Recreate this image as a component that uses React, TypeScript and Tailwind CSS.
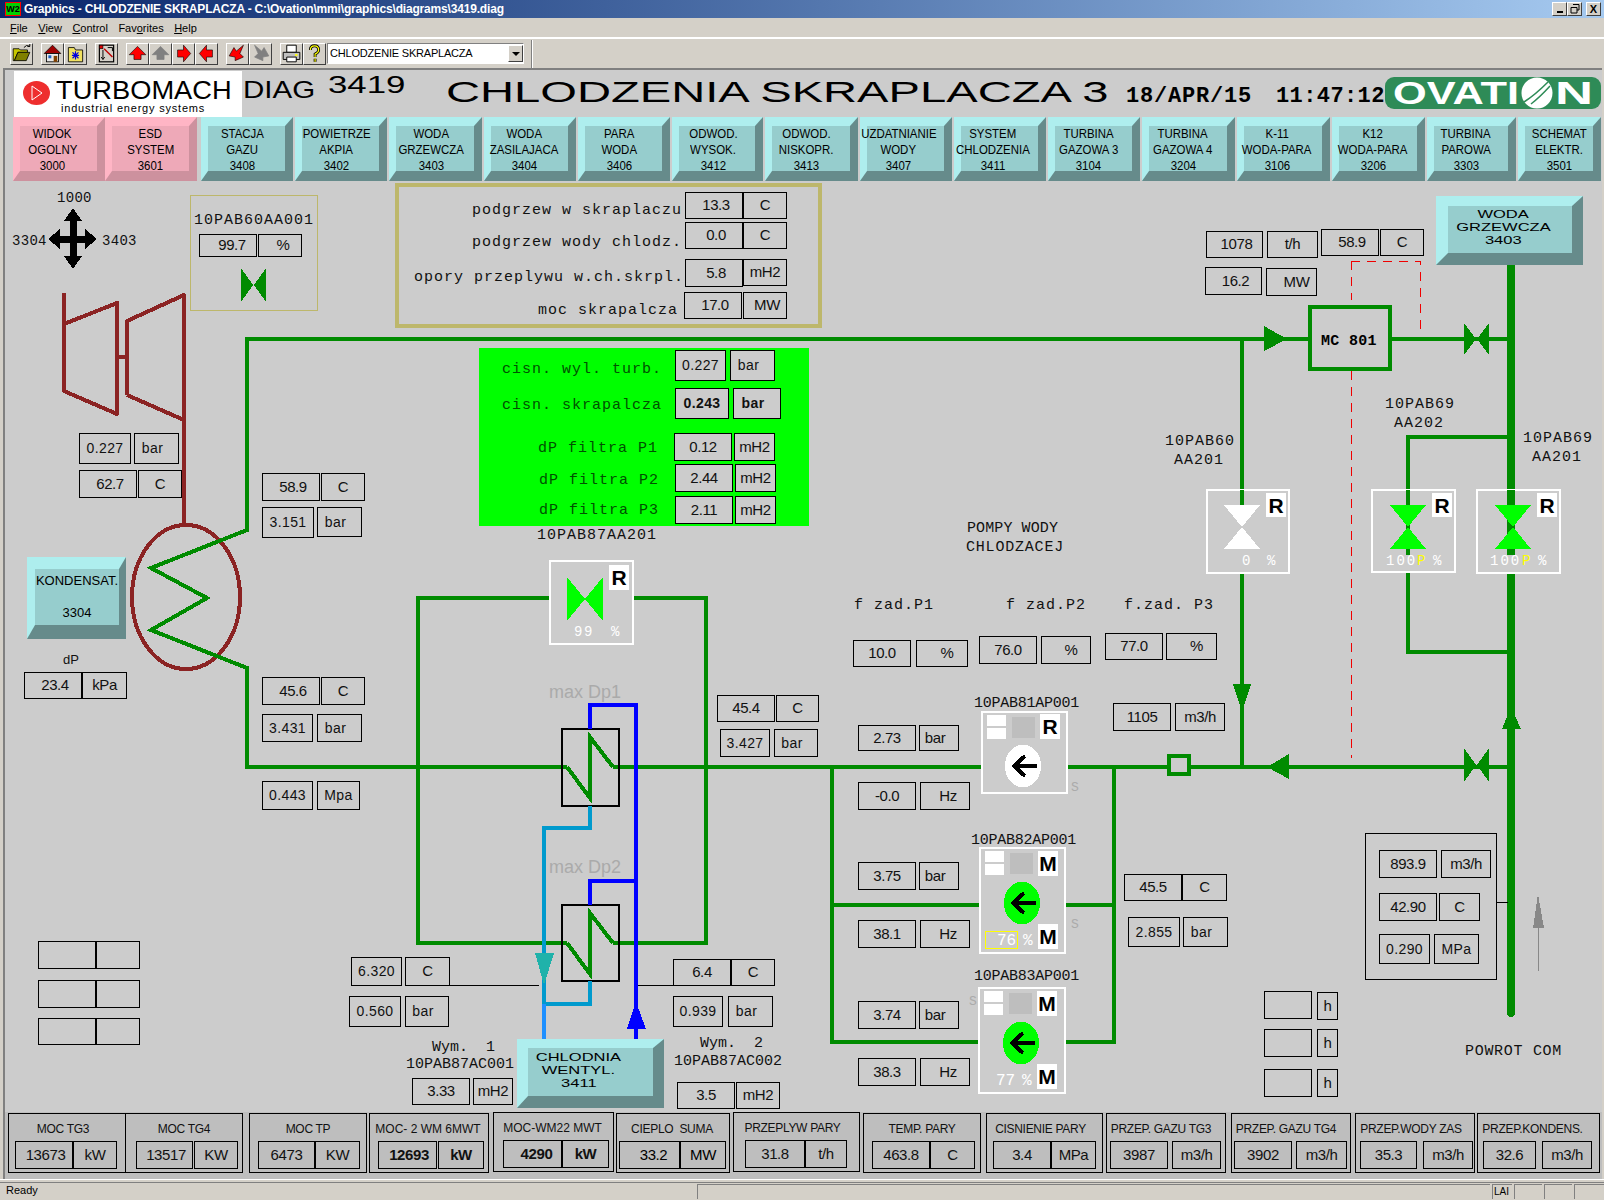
import { twMerge } from "tailwind-merge";

type CellProps = { c: string; t?: string; wide?: boolean; bold?: boolean };

// value box used all over the mimic
function Cell({ c, t, wide, bold }: CellProps) {
  return (
    <div
      className={twMerge(
        "flex items-center justify-center border border-black whitespace-nowrap text-[#111]",
        wide ? "text-[14px] tracking-[0.4px]" : "text-[15px] tracking-[-0.4px]",
        bold && "font-bold",
        t === "bar" && "pr-[8px]",
        t === "%" && "pl-[10px]",
        c
      )}
    >
      {t}
    </div>
  );
}

const V = (p: CellProps) => <Cell {...p} c={"absolute " + p.c} />;

// monospaced tag text
function L({ c, t }: { c: string; t: string }) {
  return (
    <span
      className={twMerge(
        "absolute mt-[2px] whitespace-pre font-['Liberation_Mono',monospace] text-[15px] leading-[18px] tracking-[1px] text-[#111]",
        c
      )}
    >
      {t}
    </span>
  );
}

function Tag({ c, t }: { c: string; t: string }) {
  return (
    <div className={"absolute flex items-center justify-center bg-white text-[21px] font-bold leading-none text-black " + c}>
      {t}
    </div>
  );
}

function Bevel({ c, lines, wide, navText }: { c: string; lines: string[]; wide?: boolean; navText?: boolean }) {
  return (
    <div
      className={twMerge(
        "flex flex-col items-center justify-center whitespace-nowrap border-solid border-t-[#aeeeee] border-l-[#aeeeee] border-r-[#668b8b] border-b-[#668b8b] bg-[#96cdcd] text-black",
        c
      )}
    >
      {lines.map((l, i) => (
        <span
          key={i}
          className={
            wide
              ? "scale-x-150 text-[11px] leading-[13px]"
              : navText
                ? "scale-x-[0.88] text-[13px] leading-[16px]"
                : "text-[13px] leading-[16px]"
          }
        >
          {l}
        </span>
      ))}
    </div>
  );
}

const navPink = "border-t-[#ffb5c5] border-l-[#ffb5c5] border-r-[#cd919e] border-b-[#cd919e] bg-[#eea9b8]";
const nav = "h-[64px] border-t-[9px] border-l-[7px] border-r-[8px] border-b-[10px] pt-[2px]";

const navItems = [
  { w: "w-[92px] pr-[8px]", lines: ["STACJA", "GAZU", "3408"] },
  { w: "w-[92px] pr-[8px]", lines: ["POWIETRZE", "AKPIA", "3402"] },
  { w: "w-[93px] pr-[8px]", lines: ["WODA", "GRZEWCZA", "3403"] },
  { w: "w-[92px] pr-[10px]", lines: ["WODA", "ZASILAJACA", "3404"] },
  { w: "w-[92px] pr-[8px]", lines: ["PARA", "WODA", "3406"] },
  { w: "w-[91px] pr-[8px]", lines: ["ODWOD.", "WYSOK.", "3412"] },
  { w: "w-[93px] pr-[10px]", lines: ["ODWOD.", "NISKOPR.", "3413"] },
  { w: "w-[92px] pr-[14px]", lines: ["UZDATNIANIE", "WODY", "3407"] },
  { w: "w-[92px] pr-[14px]", lines: ["SYSTEM", "CHLODZENIA", "3411"] },
  { w: "w-[92px] pr-[10px]", lines: ["TURBINA", "GAZOWA 3", "3104"] },
  { w: "w-[93px] pr-[10px]", lines: ["TURBINA", "GAZOWA 4", "3204"] },
  { w: "w-[93px] pr-[12px]", lines: ["K-11", "WODA-PARA", "3106"] },
  { w: "w-[93px] pr-[10px]", lines: ["K12", "WODA-PARA", "3206"] },
  { w: "w-[89px] pr-[10px]", lines: ["TURBINA", "PAROWA", "3303"] },
  { w: "w-[83px]", lines: ["SCHEMAT", "ELEKTR.", "3501"] },
];

function Tb({ children, c }: { children: React.ReactNode; c?: string }) {
  return (
    <div className={twMerge("flex h-[22px] w-[23px] items-center justify-center border border-t-white border-l-white border-r-[#404040] border-b-[#404040] bg-[#d4d0c8]", c)}>
      <svg viewBox="0 0 16 16" className="h-[19px] w-[19px]">
        {children}
      </svg>
    </div>
  );
}

type StatProps = { c: string; label: string; v: string; u: string; vc: string; uc: string; row: string; bold?: boolean; lc?: string };

function Stat({ c, label, v, u, vc, uc, row, bold, lc }: StatProps) {
  return (
    <div className={c}>
      <div className={twMerge("h-[16px] whitespace-pre text-center text-[12px] leading-[16px] tracking-[-0.3px] text-[#111]", lc)}>{label}</div>
      <div className={"mt-[4px] flex " + row}>
        <Cell c={"h-[28px] " + vc} t={v} bold={bold} />
        <Cell c={"h-[28px] " + uc} t={u} bold={bold} />
      </div>
    </div>
  );
}

function Pump({ x, y, w, h, fill, ex, ey }: { x: number; y: number; w: number; h: number; fill: string; ex: number; ey: number }) {
  return (
    <g>
      <rect x={x} y={y} width={w} height={h} fill="#cccccc" stroke="#fff" strokeWidth="2" />
      <rect x={x + 5} y={y + 3} width="19" height="11" fill="#fff" />
      <rect x={x + 5} y={y + 16} width="19" height="11" fill="#fff" />
      <rect x={x + 30} y={y + 5} width="23" height="21" fill="#bebebe" />
      <ellipse cx={ex} cy={ey} rx="18" ry="21.5" fill={fill} />
      <path d={`M${ex + 14} ${ey} H${ex - 8}`} stroke="#000" strokeWidth="4" fill="none" />
      <path d={`M${ex + 2} ${ey - 10} L${ex - 9} ${ey} L${ex + 2} ${ey + 10}`} stroke="#000" strokeWidth="4" fill="none" />
    </g>
  );
}

function Diagram() {
  return (
    <svg className="absolute left-0 top-0 h-[1200px] w-[1604px]" viewBox="0 0 1604 1200" shapeRendering="crispEdges">
      {/* direction cross */}
      <g fill="#000">
        <path d="M73 208 L82 221 H64 Z M73 269 L82 256 H64 Z M48 239 L60 229 V249 Z M97 239 L85 229 V249 Z" />
        <path d="M73 215 V262 M55 239 H91" stroke="#000" strokeWidth="7" />
      </g>

      {/* turbine + condenser */}
      <g fill="none" stroke="#8b2323" strokeWidth="4" strokeLinejoin="round">
        <path d="M64 293 V391 L117 414 V303 L64 324" />
        <path d="M117 357 H127" />
        <path d="M127 395 V321 L184 295 V525" />
        <path d="M127 395 L184 420" />
        <ellipse cx="186" cy="597" rx="54" ry="72" />
      </g>

      <g fill="none" stroke="#008b00" strokeWidth="4">
        <path d="M1308 339 H247 V530 L151 568 L207 598 L151 630 L247 668 V767 H567" />
        <path d="M613 767 H1511" />
        <path d="M567 767 L590 798 V737 L613 767" />
        <path d="M567 943 H418 V598 H706 V943 H613" />
        <path d="M567 943 L590 974 V913 L613 943" />
        <path d="M832 767 V1042 H1114 V767 M832 905 H1114" />
        <path d="M1392 339 H1511" />
        <path d="M1242 339 V505 M1242 573 V767" />
        <path d="M1511 437 H1408 V652 H1511" />
        <rect x="1169" y="756" width="20" height="18" fill="#cccccc" />
        <rect x="1310" y="307" width="80" height="62" fill="#cccccc" />
      </g>
      <path d="M1511 258 V1013" stroke="#008b00" strokeWidth="8" strokeLinecap="round" fill="none" />

      {/* heat exchangers */}
      <g fill="none" stroke="#000" strokeWidth="1.5">
        <rect x="562" y="729" width="57" height="77" />
        <rect x="562" y="905" width="57" height="76" />
        <path d="M449 985 H539 M636 985 H673 M1497 902 H1508" strokeWidth="1" />
      </g>
      <g fill="none" stroke="#0000ff" strokeWidth="4">
        <path d="M636 1039 V705 H590 V729" />
        <path d="M636 881 H590 V905" />
      </g>
      <g fill="none" stroke="#009acd" strokeWidth="4">
        <path d="M544 1004 V828 H590 V806" />
        <path d="M544 1004 H590 V981" />
      </g>
      <path d="M544 1004 V1040" stroke="#1e90ff" strokeWidth="4" fill="none" />
      <path d="M535 953 H554 L544 985 Z" fill="#20b2aa" />
      <path d="M636 1002 L646 1029 H627 Z" fill="#0000ff" />

      {/* arrows and valves on the pipes */}
      <g fill="#008b00">
        <path d="M1264 326 L1287 339 L1264 351 Z" />
        <path d="M1233 684 H1251 L1242 712 Z" />
        <path d="M1289 754 L1267 767 L1289 779 Z" />
        <path d="M1511 707 L1521 729 H1502 Z" />
        <path d="M1464 323 L1476 339 L1464 355 Z M1489 323 L1477 339 L1489 355 Z" />
        <path d="M1464 748 L1476 765 L1464 782 Z M1489 748 L1477 765 L1489 782 Z" />
        <path d="M241 268 L253 285 L241 302 Z M266 268 L254 285 L266 302 Z" />
      </g>
      <path d="M1533 928 L1538 894 L1544 928 Z" fill="#888" />
      <path d="M1538 928 V971" stroke="#888" strokeWidth="1" />

      {/* red dashed signal line */}
      <path d="M1351 261 V300 M1351 371 V758 M1351 261 H1420 V329" stroke="#f00000" strokeWidth="1" strokeDasharray="9 7" fill="none" />

      {/* regulating valves */}
      <g stroke="#fff" strokeWidth="2" fill="#cccccc">
        <rect x="550" y="561" width="83" height="83" />
        <rect x="1207" y="490" width="82" height="83" />
        <rect x="1372" y="490" width="83" height="82" />
        <rect x="1477" y="490" width="83" height="83" />
      </g>
      <path d="M1408 490 V555" stroke="#008b00" strokeWidth="4" />
      <path d="M1511 490 V555" stroke="#008b00" strokeWidth="8" />
      <path d="M1242 490 V510" stroke="#008b00" strokeWidth="4" />
      <path d="M567 577 L585 599 L567 621 Z M603 577 L585 599 L603 621 Z" fill="#00ff00" />
      <path d="M1224 505 H1260 L1242 527 Z M1224 549 H1260 L1242 527 Z" fill="#fff" />
      <path d="M1390 505 H1426 L1408 527 Z M1390 549 H1426 L1408 527 Z" fill="#00ff00" />
      <path d="M1495 505 H1531 L1513 527 Z M1495 549 H1531 L1513 527 Z" fill="#00ff00" />

      {/* pumps */}
      <Pump x={982} y={712} w={85} h={81} fill="#fff" ex={1023} ey={766} />
      <Pump x={980} y={848} w={85} h={105} fill="#00ff00" ex={1022} ey={903} />
      <Pump x={979} y={988} w={86} h={105} fill="#00ff00" ex={1021} ey={1043} />
      <rect x="985" y="931" width="32" height="17" fill="none" stroke="#ffff00" />
    </svg>
  );
}

export default function App() {
  return (
    <div className="relative flex h-[1200px] w-[1604px] flex-col overflow-hidden bg-[#d4d0c8] font-['Liberation_Sans',Arial,sans-serif]">
      {/* title bar */}
      <div className="flex h-[18px] items-center bg-gradient-to-r from-[#0a246a] to-[#a6caf0] pl-[5px] pr-[3px]">
        <div className="flex h-[14px] w-[16px] items-center justify-center border border-[#ff0000] bg-[#00d000] text-[9px] font-bold leading-none text-black">W2</div>
        <span className="ml-[3px] whitespace-nowrap text-[12px] font-bold tracking-[-0.18px] text-white">Graphics - CHLODZENIE SKRAPLACZA - C:\Ovation\mmi\graphics\diagrams\3419.diag</span>
        <div className="ml-auto flex">
          <div className="flex h-[14px] w-[15px] items-end justify-center border border-t-white border-l-white border-r-[#404040] border-b-[#404040] bg-[#d4d0c8] pb-[2px]"><div className="h-[2px] w-[6px] bg-black" /></div>
          <div className="flex h-[14px] w-[15px] items-center justify-center border border-t-white border-l-white border-r-[#404040] border-b-[#404040] bg-[#d4d0c8] text-[10px] leading-none">
            <svg viewBox="0 0 10 10" className="h-[10px] w-[10px]"><path d="M3 0.5 H9 V6 H7 M1 3.5 H7 V9 H1 Z" fill="none" stroke="#000" /></svg>
          </div>
          <div className="ml-[4px] flex h-[14px] w-[15px] items-center justify-center border border-t-white border-l-white border-r-[#404040] border-b-[#404040] bg-[#d4d0c8] text-[11px] font-bold leading-none">X</div>
        </div>
      </div>

      {/* menu */}
      <nav className="flex h-[20px] items-center gap-[10.5px] border-b border-b-white pl-[10px] pt-px text-[11px] text-black">
        <span><u>F</u>ile</span>
        <span><u>V</u>iew</span>
        <span><u>C</u>ontrol</span>
        <span>Fav<u>o</u>rites</span>
        <span><u>H</u>elp</span>
      </nav>

      {/* toolbar */}
      <div className="flex h-[30px] items-center border-t border-t-white pl-[10px]">
        <Tb>
          <path d="M1 4 H6 L7 5 H13 V7 H5 L2 14 H1 Z" fill="#c8c800" stroke="#000" strokeWidth="0.7" />
          <path d="M5 7 H15 L12 14 H2 Z" fill="#808000" stroke="#000" strokeWidth="0.7" />
          <path d="M10 3 Q12 0 15 2 M15 2 V0 M15 2 H13" fill="none" stroke="#000" strokeWidth="0.8" />
        </Tb>
        <Tb c="ml-[8px]">
          <path d="M1 8 L8 1 L15 8 Z" fill="#a00000" stroke="#000" strokeWidth="0.6" />
          <rect x="3" y="8" width="10" height="7" fill="#e8e8e8" stroke="#000" strokeWidth="0.7" />
          <rect x="4.5" y="9.5" width="2.5" height="2.5" fill="#2060c0" />
          <rect x="9" y="10" width="3" height="5" fill="#804000" />
        </Tb>
        <Tb>
          <path d="M2 3 H7 L8 5 H14 V15 H2 Z" fill="#f0e060" stroke="#000" strokeWidth="0.7" />
          <path d="M8 6 V13 M5 9.5 H11 M5.5 7 L10.5 12 M10.5 7 L5.5 12" stroke="#0000e0" strokeWidth="1" />
        </Tb>
        <Tb c="ml-[8px]">
          <rect x="2" y="1" width="12" height="14" fill="#d4d0c8" stroke="#000" />
          <rect x="2" y="1" width="3" height="3" fill="#e00000" stroke="#000" strokeWidth="0.5" />
          <path d="M6 4 L13 11" stroke="#c00000" strokeWidth="1.2" />
          <path d="M5 5 V13 M3.5 11 L5 13 L6.5 11 M9 3 H13 V6" stroke="#000" strokeWidth="0.8" fill="none" />
        </Tb>
        <Tb c="ml-[8px]"><path d="M8 2 L15 9 H11 V13 H5 V9 H1 Z" fill="#ff0000" stroke="#000" strokeWidth="0.5" /></Tb>
        <Tb><path d="M8 2 L15 9 H11 V13 H5 V9 H1 Z" fill="#808080" stroke="#808080" strokeWidth="0.6" /></Tb>
        <Tb><path d="M14 8 L8 1 V5 H3 V11 H8 V15 Z" fill="#ff0000" stroke="#000" strokeWidth="0.5" /></Tb>
        <Tb><path d="M2 8 L8 1 V5 H13 V11 H8 V15 Z" fill="#ff0000" stroke="#000" strokeWidth="0.5" /></Tb>
        <Tb c="ml-[8px]"><path d="M1 10 L5 3 L7 6 L13 1 L10 8 L13 11 L6 14 L6 11 Z" fill="#ff0000" stroke="#000" strokeWidth="0.5" /></Tb>
        <Tb><path d="M15 10 L11 3 L9 6 L3 1 L6 8 L3 11 L10 14 L10 11 Z" fill="#808080" stroke="#808080" strokeWidth="0.6" /></Tb>
        <Tb c="ml-[8px]">
          <path d="M4 1 H12 V7 H4 Z" fill="#fff" stroke="#000" strokeWidth="0.8" />
          <path d="M1 7 H15 V13 H1 Z" fill="#c0c0c0" stroke="#000" strokeWidth="0.8" />
          <path d="M4 11 H12 V15 H4 Z" fill="#fff" stroke="#000" strokeWidth="0.8" />
          <rect x="11" y="8.5" width="2" height="1.5" fill="#ffff00" />
        </Tb>
        <Tb><path d="M4.5 5 Q4.5 1.5 8 1.5 Q11.5 1.5 11.5 5 Q11.5 7 8.5 8.5 V11 M8.5 12.5 V15" fill="none" stroke="#000" strokeWidth="2.4" /><path d="M4.5 5 Q4.5 1.5 8 1.5 Q11.5 1.5 11.5 5 Q11.5 7 8.5 8.5 V11 M8.5 12.5 V15" fill="none" stroke="#ffff00" strokeWidth="1" /></Tb>
        <div className="ml-px flex h-[21px] w-[197px] items-center border border-t-[#808080] border-l-[#808080] border-r-white border-b-white bg-white pl-[2px] text-[11px] tracking-[-0.2px] text-black">
          CHLODZENIE SKRAPLACZA
          <div className="ml-auto flex h-[17px] w-[15px] items-center justify-center border border-t-white border-l-white border-r-[#404040] border-b-[#404040] bg-[#d4d0c8]">
            <div className="h-0 w-0 border-x-[4px] border-t-[4px] border-x-transparent border-t-black" />
          </div>
        </div>
        <div className="ml-[7px] h-[28px] border-l border-l-[#808080] border-r border-r-white" />
      </div>

      {/* mimic window */}
      <main className="ml-[3px] flex h-[1111px] w-[1599px] flex-col border-l-2 border-t-2 border-[#808080] bg-[#cccccc] pt-px">
        <header className="flex h-[46px] pl-[9px]">
          <div className="flex h-[46px] w-[228px] bg-white pl-[9px] pt-[10px] text-black">
            <svg viewBox="0 0 27 24" className="h-[24px] w-[27px]">
              <ellipse cx="13.5" cy="12" rx="13.5" ry="12" fill="#ee2e2e" />
              <path d="M9 5 L19 12 L9 19 Z" fill="none" stroke="#fff" strokeWidth="1" />
            </svg>
            <div className="ml-[6px] -mt-[4px]">
              <div className="origin-left scale-x-[1.09] text-[25px] leading-[26px]">TURBOMACH</div>
              <div className="ml-[5px] -mt-[1px] text-[11px] leading-[13px] tracking-[0.8px]">industrial energy systems</div>
            </div>
          </div>
          <div className="ml-px mt-[5px] w-[85px] origin-left scale-x-[1.23] text-[24px] leading-[28px] text-black">DIAG</div>
          <div className="mt-0 w-[118px] origin-left scale-x-[1.45] text-[24px] leading-[28px] text-black">3419</div>
          <div className="mt-[4px] w-[680px] origin-left scale-x-[1.625] whitespace-nowrap text-[29px] leading-[34px] text-black">CHLODZENIA SKRAPLACZA 3</div>
          <div className="mt-[13px] w-[150px] font-['Liberation_Mono',monospace] text-[22px] font-bold leading-[26px] tracking-[0.8px] text-black">18/APR/15</div>
          <div className="mt-[13px] w-[109px] font-['Liberation_Mono',monospace] text-[22px] font-bold leading-[26px] tracking-[0.4px] text-black">11:47:12</div>
          <svg viewBox="0 0 216 32" className="mt-[6px] h-[32px] w-[216px]">
            <rect width="216" height="32" rx="9" fill="#2e8b57" />
            <text x="8" y="27" fontSize="32" fontWeight="700" fill="#fff" textLength="126" lengthAdjust="spacingAndGlyphs" fontFamily="Liberation Sans">OVATI</text>
            <text x="137" y="27" fontSize="32" fontWeight="700" fill="#fff" textLength="30" lengthAdjust="spacingAndGlyphs" fontFamily="Liberation Sans">O</text>
            <text x="170" y="27" fontSize="32" fontWeight="700" fill="#fff" textLength="38" lengthAdjust="spacingAndGlyphs" fontFamily="Liberation Sans">N</text>
            <circle cx="152" cy="16" r="15.5" fill="#fff" />
            <path d="M139 25 Q150 18 163 5 M146 27 Q155 20 165 9" stroke="#2e8b57" strokeWidth="1.5" fill="none" />
          </svg>
        </header>

        <div className="flex h-[64px] pl-[8px]">
          <Bevel c={`w-[92px] pr-[12px] ${nav} ${navPink}`} lines={["WIDOK", "OGOLNY", "3000"]} navText />
          <Bevel c={`w-[92px] ${nav} ${navPink}`} lines={["ESD", "SYSTEM", "3601"]} navText />
          <div className="ml-[4px] flex gap-[2px]">
            {navItems.map((n) => (
              <Bevel key={n.lines[2]} c={`${nav} ${n.w}`} lines={n.lines} navText />
            ))}
          </div>
        </div>

        {/* free canvas: everything below is placed in page coordinates */}
        <section className="h-[931px]">
          <Diagram />

          <L c="left-[57px] top-[188px] mt-0 text-[14px] tracking-[0.3px]" t="1000" />
          <L c="left-[12px] top-[231px] mt-0 text-[14px] tracking-[0.3px]" t="3304" />
          <L c="left-[102px] top-[231px] mt-0 text-[14px] tracking-[0.3px]" t="3403" />

          <div className="absolute left-[190px] top-[195px] h-[116px] w-[128px] border border-[#bdb76b]" />
          <L c="left-[194px] top-[210px]" t="10PAB60AA001" />
          <V c="left-[199px] top-[234px] h-[23px] w-[58px] pl-[8px]" t="99.7" />
          <V c="left-[258px] top-[234px] h-[23px] w-[44px] pl-[6px]" t="%" />

          <div className="absolute left-[395px] top-[183px] h-[145px] w-[427px] border-4 border-[#bdb76b]" />
          <L c="left-[472px] top-[200px]" t="podgrzew w skraplaczu" />
          <L c="left-[472px] top-[232px]" t="podgrzew wody chlodz." />
          <L c="left-[414px] top-[267px]" t="opory przeplywu w.ch.skrpl." />
          <L c="left-[538px] top-[300px]" t="moc skrapalcza" />
          <V c="left-[685px] top-[192px] h-[27px] w-[58px] pl-[4px]" t="13.3" />
          <V c="left-[743px] top-[192px] h-[27px] w-[44px]" t="C" />
          <V c="left-[685px] top-[222px] h-[27px] w-[58px] pl-[4px]" t="0.0" />
          <V c="left-[743px] top-[222px] h-[27px] w-[44px]" t="C" />
          <V c="left-[685px] top-[259px] h-[28px] w-[58px] pl-[4px]" t="5.8" />
          <V c="left-[743px] top-[259px] h-[27px] w-[44px]" t="mH2" />
          <V c="left-[684px] top-[292px] h-[27px] w-[58px] pl-[4px]" t="17.0" />
          <V c="left-[743px] top-[292px] h-[27px] w-[44px] pl-[4px]" t="MW" />

          <div className="absolute left-[479px] top-[348px] h-[178px] w-[330px] bg-[#00ff00]" />
          <L c="left-[502px] top-[359px] text-[#005000]" t="cisn. wyl. turb." />
          <L c="left-[502px] top-[395px] text-[#005000]" t="cisn. skrapalcza" />
          <L c="left-[538px] top-[438px] text-[#005000]" t="dP filtra P1" />
          <L c="left-[539px] top-[470px] text-[#005000]" t="dP filtra P2" />
          <L c="left-[539px] top-[500px] text-[#005000]" t="dP filtra P3" />
          <V c="left-[675px] top-[350px] h-[31px] w-[51px] bg-[#cccccc]" t="0.227" wide />
          <V c="left-[730px] top-[350px] h-[31px] w-[45px] bg-[#cccccc]" t="bar" wide />
          <V c="left-[675px] top-[388px] h-[31px] w-[54px] bg-[#cccccc]" t="0.243" wide bold />
          <V c="left-[733px] top-[388px] h-[31px] w-[48px] bg-[#cccccc]" t="bar" wide bold />
          <V c="left-[674px] top-[433px] h-[28px] w-[58px] bg-[#cccccc]" t="0.12" />
          <V c="left-[734px] top-[433px] h-[28px] w-[41px] bg-[#cccccc]" t="mH2" />
          <V c="left-[675px] top-[464px] h-[28px] w-[58px] bg-[#cccccc]" t="2.44" />
          <V c="left-[735px] top-[464px] h-[28px] w-[41px] bg-[#cccccc]" t="mH2" />
          <V c="left-[675px] top-[496px] h-[28px] w-[58px] bg-[#cccccc]" t="2.11" />
          <V c="left-[735px] top-[496px] h-[28px] w-[41px] bg-[#cccccc]" t="mH2" />
          <L c="left-[537px] top-[525px]" t="10PAB87AA201" />

          <V c="left-[79px] top-[433px] h-[31px] w-[52px]" t="0.227" wide />
          <V c="left-[134px] top-[433px] h-[31px] w-[45px]" t="bar" wide />
          <V c="left-[79px] top-[470px] h-[28px] w-[58px] pl-[4px]" t="62.7" />
          <V c="left-[138px] top-[470px] h-[28px] w-[44px]" t="C" />
          <V c="left-[262px] top-[473px] h-[28px] w-[58px] pl-[4px]" t="58.9" />
          <V c="left-[321px] top-[473px] h-[28px] w-[44px]" t="C" />
          <V c="left-[262px] top-[507px] h-[31px] w-[52px]" t="3.151" wide />
          <V c="left-[317px] top-[507px] h-[30px] w-[45px]" t="bar" wide />

          <Bevel c="absolute left-[27px] top-[557px] h-[82px] w-[99px] border-t-[12px] border-l-[8px] border-r-[7px] border-b-[14px] text-[13px]" lines={["KONDENSAT.", "\u00a0", "3304"]} />
          <span className="absolute left-[63px] top-[652px] text-[13px] leading-[16px] text-[#111]">dP</span>
          <V c="left-[24px] top-[672px] h-[27px] w-[58px] pl-[4px]" t="23.4" />
          <V c="left-[82px] top-[672px] h-[27px] w-[45px]" t="kPa" />

          <V c="left-[262px] top-[677px] h-[28px] w-[58px] pl-[4px]" t="45.6" />
          <V c="left-[321px] top-[677px] h-[28px] w-[44px]" t="C" />
          <V c="left-[262px] top-[714px] h-[28px] w-[51px]" t="3.431" wide />
          <V c="left-[317px] top-[714px] h-[28px] w-[45px]" t="bar" wide />
          <V c="left-[262px] top-[781px] h-[29px] w-[51px]" t="0.443" wide />
          <V c="left-[317px] top-[781px] h-[29px] w-[43px]" t="Mpa" wide />

          <V c="left-[38px] top-[941px] h-[28px] w-[58px]" />
          <V c="left-[96px] top-[941px] h-[28px] w-[44px]" />
          <V c="left-[38px] top-[980px] h-[28px] w-[58px]" />
          <V c="left-[96px] top-[980px] h-[28px] w-[44px]" />
          <V c="left-[38px] top-[1018px] h-[27px] w-[58px]" />
          <V c="left-[96px] top-[1018px] h-[27px] w-[44px]" />

          <V c="left-[351px] top-[957px] h-[29px] w-[51px]" t="6.320" wide />
          <V c="left-[405px] top-[957px] h-[29px] w-[45px]" t="C" />
          <V c="left-[349px] top-[996px] h-[31px] w-[52px]" t="0.560" wide />
          <V c="left-[405px] top-[996px] h-[31px] w-[44px]" t="bar" wide />
          <V c="left-[673px] top-[959px] h-[27px] w-[58px]" t="6.4" />
          <V c="left-[731px] top-[959px] h-[27px] w-[44px]" t="C" />
          <V c="left-[673px] top-[996px] h-[31px] w-[50px]" t="0.939" wide />
          <V c="left-[728px] top-[996px] h-[31px] w-[45px]" t="bar" wide />

          <span className="absolute left-[549px] top-[681px] text-[18px] leading-[22px] text-[#aaaaaa]">max Dp1</span>
          <span className="absolute left-[549px] top-[856px] text-[18px] leading-[22px] text-[#aaaaaa]">max Dp2</span>
          <V c="left-[717px] top-[695px] h-[27px] w-[58px]" t="45.4" />
          <V c="left-[776px] top-[695px] h-[27px] w-[43px]" t="C" />
          <V c="left-[720px] top-[729px] h-[28px] w-[50px]" t="3.427" wide />
          <V c="left-[774px] top-[729px] h-[28px] w-[44px]" t="bar" wide />

          <L c="left-[432px] top-[1037px] tracking-[0px]" t="Wym.  1" />
          <L c="left-[406px] top-[1054px] tracking-[0px]" t="10PAB87AC001" />
          <L c="left-[700px] top-[1033px] tracking-[0px]" t="Wym.  2" />
          <L c="left-[674px] top-[1051px] tracking-[0px]" t="10PAB87AC002" />
          <V c="left-[412px] top-[1078px] h-[27px] w-[58px]" t="3.33" />
          <V c="left-[473px] top-[1078px] h-[27px] w-[40px]" t="mH2" />
          <V c="left-[677px] top-[1082px] h-[27px] w-[58px]" t="3.5" />
          <V c="left-[736px] top-[1082px] h-[27px] w-[44px]" t="mH2" />
          <Bevel c="absolute left-[517px] top-[1039px] h-[69px] w-[147px] border-t-[9px] border-l-[11px] border-r-[11px] border-b-[12px] pb-[4px] pr-[24px]" lines={["CHLODNIA", "WENTYL.", "3411"]} wide />
          <Bevel c="absolute left-[1436px] top-[196px] h-[69px] w-[147px] border-t-[10px] border-l-[12px] border-r-[11px] border-b-[12px] pb-[4px] pr-[14px]" lines={["WODA", "GRZEWCZA", "3403"]} wide />

          <Tag c="left-[609px] top-[565px] h-[25px] w-[20px]" t="R" />
          <L c="left-[574px] top-[622px] mt-0 text-[14px] tracking-[1.6px] text-white" t="99" />
          <L c="left-[611px] top-[622px] mt-0 text-[14px] text-white" t="%" />

          <V c="left-[1206px] top-[231px] h-[27px] w-[57px] pl-[4px]" t="1078" />
          <V c="left-[1267px] top-[231px] h-[27px] w-[51px]" t="t/h" />
          <V c="left-[1321px] top-[229px] h-[27px] w-[58px] pl-[4px]" t="58.9" />
          <V c="left-[1380px] top-[229px] h-[27px] w-[44px]" t="C" />
          <V c="left-[1205px] top-[267px] h-[28px] w-[57px] pl-[4px]" t="16.2" />
          <V c="left-[1266px] top-[268px] h-[28px] w-[51px] pl-[10px]" t="MW" />
          <L c="left-[1321px] top-[331px] font-bold tracking-[0.3px] text-black" t="MC 801" />

          <L c="left-[1165px] top-[431px]" t="10PAB60" />
          <L c="left-[1174px] top-[450px]" t="AA201" />
          <L c="left-[1385px] top-[394px]" t="10PAB69" />
          <L c="left-[1394px] top-[413px]" t="AA202" />
          <L c="left-[1523px] top-[428px]" t="10PAB69" />
          <L c="left-[1532px] top-[447px]" t="AA201" />

          <Tag c="left-[1266px] top-[493px] h-[24px] w-[20px]" t="R" />
          <Tag c="left-[1432px] top-[493px] h-[24px] w-[20px]" t="R" />
          <Tag c="left-[1537px] top-[493px] h-[24px] w-[20px]" t="R" />
          <L c="left-[1242px] top-[551px] mt-0 text-[14px] text-white" t="0" />
          <L c="left-[1267px] top-[551px] mt-0 text-[14px] text-white" t="%" />
          <L c="left-[1386px] top-[551px] mt-0 text-[14px] tracking-[2px] text-white" t="100" />
          <L c="left-[1417px] top-[551px] mt-0 text-[14px] text-[#ffff00]" t="P" />
          <L c="left-[1433px] top-[551px] mt-0 text-[14px] text-white" t="%" />
          <L c="left-[1490px] top-[551px] mt-0 text-[14px] tracking-[2px] text-white" t="100" />
          <L c="left-[1522px] top-[551px] mt-0 text-[14px] text-[#ffff00]" t="P" />
          <L c="left-[1538px] top-[551px] mt-0 text-[14px] text-white" t="%" />

          <L c="left-[967px] top-[518px] tracking-[0.1px]" t="POMPY WODY" />
          <L c="left-[966px] top-[537px] tracking-[0.8px]" t="CHLODZACEJ" />
          <L c="left-[854px] top-[595px]" t="f zad.P1" />
          <L c="left-[1006px] top-[595px]" t="f zad.P2" />
          <L c="left-[1124px] top-[595px]" t="f.zad. P3" />
          <V c="left-[853px] top-[640px] h-[27px] w-[58px]" t="10.0" />
          <V c="left-[916px] top-[640px] h-[27px] w-[52px]" t="%" />
          <V c="left-[979px] top-[636px] h-[28px] w-[58px]" t="76.0" />
          <V c="left-[1041px] top-[636px] h-[28px] w-[50px]" t="%" />
          <V c="left-[1105px] top-[633px] h-[27px] w-[58px]" t="77.0" />
          <V c="left-[1166px] top-[633px] h-[27px] w-[51px]" t="%" />

          <L c="left-[974px] top-[693px] tracking-[-0.25px]" t="10PAB81AP001" />
          <L c="left-[971px] top-[830px] tracking-[-0.25px]" t="10PAB82AP001" />
          <L c="left-[974px] top-[966px] tracking-[-0.25px]" t="10PAB83AP001" />
          <Tag c="left-[1040px] top-[714px] h-[25px] w-[20px]" t="R" />
          <Tag c="left-[1038px] top-[851px] h-[25px] w-[20px]" t="M" />
          <Tag c="left-[1038px] top-[924px] h-[25px] w-[20px]" t="M" />
          <Tag c="left-[1037px] top-[991px] h-[25px] w-[20px]" t="M" />
          <Tag c="left-[1037px] top-[1064px] h-[25px] w-[20px]" t="M" />
          <L c="left-[997px] top-[929px] mt-0 text-[16px] tracking-[0px] text-white" t="76" />
          <L c="left-[1023px] top-[929px] mt-0 text-[16px] tracking-[0px] text-white" t="%" />
          <L c="left-[996px] top-[1069px] mt-0 text-[16px] tracking-[0px] text-white" t="77" />
          <L c="left-[1022px] top-[1069px] mt-0 text-[16px] tracking-[0px] text-white" t="%" />
          <L c="left-[1071px] top-[778px] mt-0 text-[13px] text-[#aaaaaa]" t="S" />
          <L c="left-[1071px] top-[915px] mt-0 text-[13px] text-[#aaaaaa]" t="S" />
          <L c="left-[969px] top-[992px] mt-0 text-[13px] text-[#aaaaaa]" t="S" />

          <V c="left-[858px] top-[725px] h-[26px] w-[58px]" t="2.73" />
          <V c="left-[919px] top-[725px] h-[26px] w-[40px]" t="bar" />
          <V c="left-[858px] top-[782px] h-[28px] w-[58px]" t="-0.0" />
          <V c="left-[920px] top-[782px] h-[28px] w-[50px] pl-[6px]" t="Hz" />
          <V c="left-[858px] top-[862px] h-[28px] w-[58px]" t="3.75" />
          <V c="left-[919px] top-[862px] h-[28px] w-[40px]" t="bar" />
          <V c="left-[858px] top-[920px] h-[28px] w-[58px]" t="38.1" />
          <V c="left-[920px] top-[920px] h-[28px] w-[50px] pl-[6px]" t="Hz" />
          <V c="left-[858px] top-[1001px] h-[28px] w-[58px]" t="3.74" />
          <V c="left-[919px] top-[1001px] h-[28px] w-[40px]" t="bar" />
          <V c="left-[858px] top-[1058px] h-[28px] w-[58px]" t="38.3" />
          <V c="left-[920px] top-[1058px] h-[28px] w-[50px] pl-[6px]" t="Hz" />

          <V c="left-[1113px] top-[703px] h-[28px] w-[58px]" t="1105" />
          <V c="left-[1175px] top-[703px] h-[28px] w-[50px]" t="m3/h" />
          <V c="left-[1124px] top-[874px] h-[27px] w-[58px]" t="45.5" />
          <V c="left-[1182px] top-[874px] h-[27px] w-[45px]" t="C" />
          <V c="left-[1128px] top-[917px] h-[30px] w-[52px]" t="2.855" wide />
          <V c="left-[1183px] top-[917px] h-[30px] w-[45px]" t="bar" wide />

          <div className="absolute left-[1365px] top-[833px] h-[147px] w-[132px] border border-black" />
          <V c="left-[1379px] top-[850px] h-[28px] w-[58px]" t="893.9" />
          <V c="left-[1441px] top-[850px] h-[28px] w-[50px]" t="m3/h" />
          <V c="left-[1379px] top-[893px] h-[28px] w-[58px]" t="42.90" />
          <V c="left-[1439px] top-[893px] h-[28px] w-[41px]" t="C" />
          <V c="left-[1379px] top-[934px] h-[30px] w-[51px]" t="0.290" wide />
          <V c="left-[1434px] top-[934px] h-[30px] w-[45px]" t="MPa" wide />
          <V c="left-[1264px] top-[991px] h-[28px] w-[48px]" />
          <V c="left-[1317px] top-[992px] h-[28px] w-[21px]" t="h" />
          <V c="left-[1264px] top-[1029px] h-[28px] w-[48px]" />
          <V c="left-[1317px] top-[1029px] h-[28px] w-[21px]" t="h" />
          <V c="left-[1264px] top-[1069px] h-[28px] w-[48px]" />
          <V c="left-[1317px] top-[1069px] h-[28px] w-[21px]" t="h" />
          <L c="left-[1465px] top-[1041px] tracking-[0.7px]" t="POWROT COM" />
        </section>

        {/* totals strip */}
        <div className="flex h-[67px] items-start bg-[#bebebe] pl-[3px] pt-px">
          <div className="flex h-[60px] w-[235px] border border-black pt-[7px]">
            <Stat c="w-[117px]" lc="pr-[8px]" row="pl-[6px]" label="MOC TG3" v="13673" u="kW" vc="w-[58px] pl-[3px]" uc="w-[44px]" />
            <Stat c="w-[118px] -mt-[7px] border-l border-black pt-[7px]" row="pl-[10px] gap-px" label="MOC TG4" v="13517" u="KW" vc="w-[57px] pl-[3px]" uc="w-[44px]" />
          </div>
          <Stat c="ml-[6px] h-[60px] w-[118px] border border-black pt-[7px]" row="pl-[8px]" label="MOC TP" v="6473" u="KW" vc="w-[57px]" uc="w-[45px]" />
          <Stat c="ml-[2px] h-[60px] w-[120px] border border-black pt-[7px]" lc="tracking-[0px] pr-[2px]" row="pl-[8px] gap-px" label="MOC- 2 WM 6MWT" v="12693" u="kW" vc="w-[59px] pl-[3px]" uc="w-[46px]" bold />
          <Stat c="ml-[4px] -mt-px h-[60px] w-[121px] border border-black pt-[7px]" lc="tracking-[0px] pr-[2px]" row="pl-[9px]" label="MOC-WM22 MWT" v="4290" u="kW" vc="w-[59px] pl-[8px]" uc="w-[47px]" bold />
          <Stat c="ml-[2px] h-[60px] w-[114px] border border-black pt-[7px]" lc="pr-[2px]" row="pl-[2px]" label="CIEPLO  SUMA" v="33.2" u="MW" vc="w-[61px] pl-[8px] text-black" uc="w-[46px] text-black" />
          <Stat c="ml-[3px] -mt-px h-[60px] w-[127px] border border-black pt-[7px]" lc="pr-[8px]" row="pl-[11px]" label="PRZEPLYW PARY" v="31.8" u="t/h" vc="w-[60px]" uc="w-[42px]" />
          <Stat c="ml-[3px] h-[60px] w-[118px] border border-black pt-[7px]" row="pl-[8px]" label="TEMP. PARY" v="463.8" u="C" vc="w-[58px]" uc="w-[45px]" />
          <Stat c="ml-[5px] h-[60px] w-[117px] border border-black pt-[7px]" lc="pr-[8px]" row="pl-[6px]" label="CISNIENIE PARY" v="3.4" u="MPa" vc="w-[58px]" uc="w-[45px]" />
          <Stat c="ml-[3px] h-[60px] w-[120px] border border-black pt-[7px]" lc="pr-[10px]" row="pl-[3px] gap-[4px]" label="PRZEP. GAZU TG3" v="3987" u="m3/h" vc="w-[58px]" uc="w-[49px]" />
          <Stat c="ml-[5px] h-[60px] w-[120px] border border-black pt-[7px]" lc="pr-[10px]" row="pl-[2px] gap-[4px]" label="PRZEP. GAZU TG4" v="3902" u="m3/h" vc="w-[58px]" uc="w-[51px]" />
          <Stat c="ml-[4px] h-[60px] w-[120px] border border-black pt-[7px]" lc="pr-[8px]" row="pl-[4px] gap-[6px]" label="PRZEP.WODY ZAS" v="35.3" u="m3/h" vc="w-[57px]" uc="w-[50px]" />
          <Stat c="ml-[2px] h-[60px] w-[123px] border border-black pt-[7px]" lc="pr-[12px]" row="pl-[5px] gap-[6px]" label="PRZEP.KONDENS." v="32.6" u="m3/h" vc="w-[53px]" uc="w-[50px]" />
        </div>
      </main>

      {/* status bar */}
      <footer className="h-[20px] border-t border-t-white pt-[2px] text-[11px] text-black">
        <div className="flex h-[17px] items-end border-t border-t-[#808080] pl-[6px]">
          <span className="mb-px">Ready</span>
          <div className="ml-auto flex h-[15px]">
            <div className="w-[793px] border-l border-t border-l-[#808080] border-t-[#808080]" />
            <div className="ml-[2px] w-[20px] border-l border-t border-l-[#808080] border-t-[#808080] pl-px text-[10px] leading-[13px]">LAI</div>
            <div className="ml-[2px] w-[28px] border-l border-t border-l-[#808080] border-t-[#808080]" />
            <div className="ml-[2px] w-[28px] border-l border-t border-l-[#808080] border-t-[#808080]" />
            <div className="ml-[2px] w-[30px] border-l border-t border-l-[#808080] border-t-[#808080]" />
          </div>
        </div>
      </footer>
    </div>
  );
}
